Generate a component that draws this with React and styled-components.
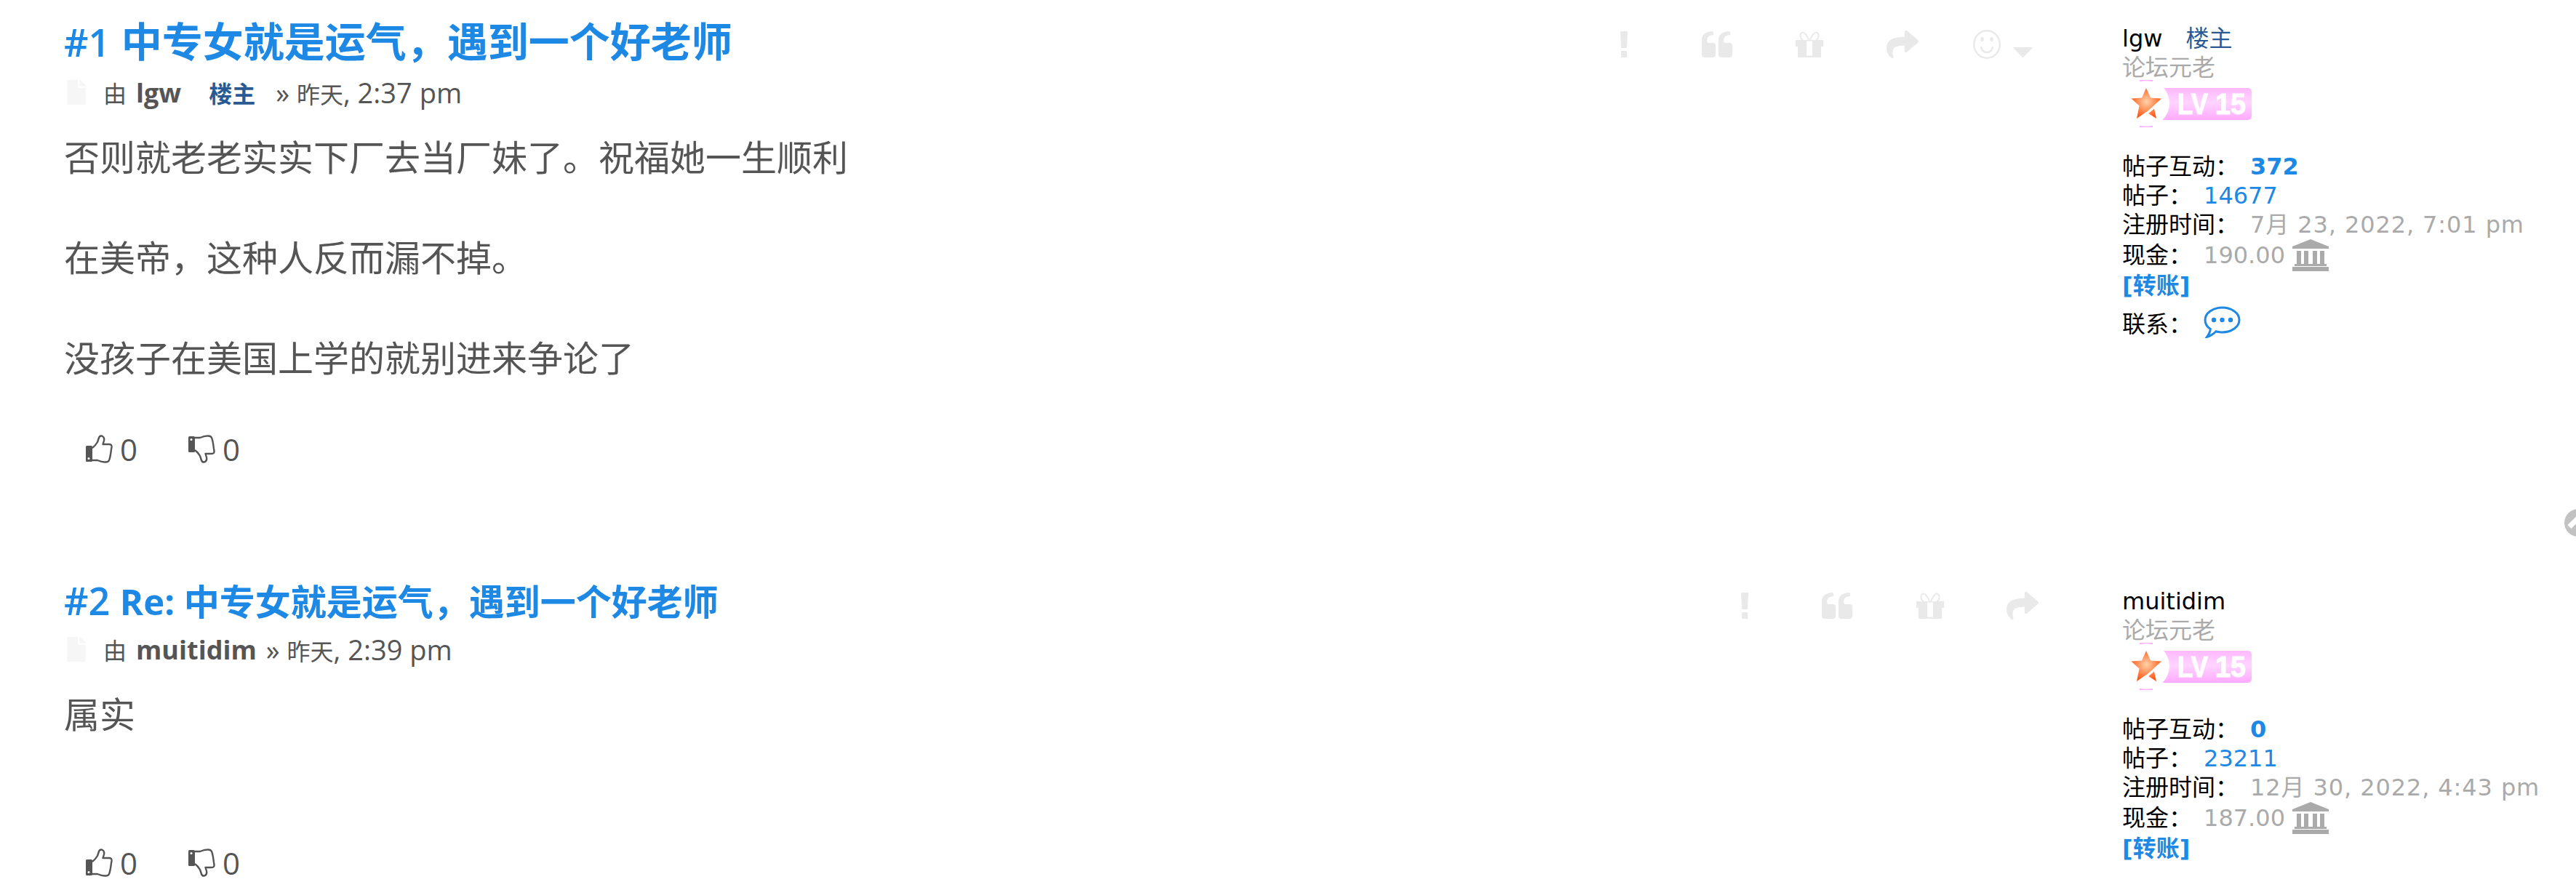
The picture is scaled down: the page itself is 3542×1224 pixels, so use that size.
import React from 'react'
import styled, { createGlobalStyle } from 'styled-components'
import { FaShare, FaFile } from 'react-icons/fa'

const GlobalStyle = createGlobalStyle`
  html, body { margin: 0; padding: 0; background: #fff; overflow: hidden; height: 1224px; }
  body { font-family: "Open Sans", "Noto Sans CJK SC", sans-serif; color: #555; }
`

// full-width punctuation
const COMMA = '\uFF0C'
const COLON = '\uFF1A'

const posts = [
  {
    num: '#1', title: `中专女就是运气${COMMA}遇到一个好老师`, author: 'lgw', op: true, day: '昨天', time: ', 2:37 pm',
    lines: ['否则就老老实实下厂去当厂妹了。祝福她一生顺利', `在美帝${COMMA}这种人反而漏不掉。`, '没孩子在美国上学的就别进来争论了'],
    smiley: true, reactions: 372, count: 14677, joined: '7月 23, 2022, 7:01 pm', cash: '190.00', contact: true,
  },
  {
    num: '#2', title: `Re: 中专女就是运气${COMMA}遇到一个好老师`, author: 'muitidim', op: false, day: '昨天', time: ', 2:39 pm',
    lines: ['属实'],
    smiley: false, reactions: 0, count: 23211, joined: '12月 30, 2022, 4:43 pm', cash: '187.00', contact: false,
  },
]

const ExclaimIcon = () => (
  <svg width="10" height="36" viewBox="0 0 10 36" fill="currentColor">
    <path d="M0 1 Q0 0 1 0 H9 Q10 0 10 1 L9 22 Q9 23 8 23 H2 Q1 23 1 22 Z" />
    <rect x="1" y="27" width="8" height="9" rx="1" />
  </svg>
)

const QuoteIcon = () => (
  <svg width="42" height="36" viewBox="0 0 42 36" fill="currentColor">
    <path d="M0 12 Q0 1 14 0 Q16 0 16 2 V5 Q8 5 7 12 Q7 16 9 16 H15 Q19 16 19 19 V32 Q19 36 15 36 H4 Q0 36 0 32 Z" />
    <path d="M23 12 Q23 1 37 0 Q39 0 39 2 V5 Q31 5 30 12 Q30 16 32 16 H38 Q42 16 42 19 V32 Q42 36 38 36 H27 Q23 36 23 32 Z" />
  </svg>
)

const GiftIcon = () => (
  <svg width="38" height="36" viewBox="0 0 38 36" fill="currentColor">
    <path fillRule="evenodd" d="M0 12 H38 V21 H35 V35 Q35 36 34 36 H4 Q3 36 3 35 V21 H0 Z M15 13.500 V33.500 H23 V13.500 Z" />
    <path d="M18 12 Q14 2 10 1.500 Q6 2 6.500 7 Q7 11 10 12 M20 12 Q24 2 28 1.500 Q32 2 31.500 7 Q31 11 28 12" fill="none" stroke="currentColor" strokeWidth="2" />
  </svg>
)

const SmileIcon = () => (
  <svg width="38" height="40" viewBox="0 0 38 40" fill="none" stroke="currentColor" strokeWidth="2.4">
    <ellipse cx="19" cy="20" rx="17.800" ry="18.800" />
    <ellipse cx="12.500" cy="13" rx="2.400" ry="3" fill="currentColor" stroke="none" />
    <ellipse cx="25.500" cy="13" rx="2.400" ry="3" fill="currentColor" stroke="none" />
    <path d="M11 23 Q12 31 19 31 Q26 31 27 23" />
  </svg>
)

const CaretIcon = () => (
  <svg width="27" height="14" viewBox="0 0 27 14" fill="currentColor">
    <path d="M1 0 H26 Q27 0 26.500 1 L14 14 H13 L0.500 1 Q0 0 1 0 Z" />
  </svg>
)

const ThumbIcon = ({ down }) => (
  <ThumbSvg viewBox="0 0 37 39">
    <g transform={down ? 'translate(0 39) scale(1 -1)' : undefined}>
      <rect x="0" y="15" width="9" height="22" rx="1.500" fill="#555" />
      <circle cx="4" cy="32.500" r="1.500" fill="#fff" />
      <path
        d="M9 18 Q13 15 16 10 L18 4 Q19 1 22 1.500 Q26 3 25 8 L23.500 13 H32 Q36 13 35.500 17 L35 20 Q33.500 32 32 35 Q30.500 38 26 37.500 Q22 37.500 16 35 H9"
        fill="none" stroke="#555" strokeWidth="2.400" strokeLinejoin="round"
      />
    </g>
  </ThumbSvg>
)

const BankIcon = () => (
  <svg width="50" height="44" viewBox="0 0 50 44" fill="#aaa">
    <path d="M25 0 L50 10 V13 H0 V10 Z" />
    <rect x="6" y="16" width="6" height="20" />
    <rect x="16" y="16" width="6" height="20" />
    <rect x="28" y="16" width="6" height="20" />
    <rect x="38" y="16" width="6" height="20" />
    <rect x="3" y="34" width="44" height="3" />
    <rect x="0" y="38" width="50" height="6" />
  </svg>
)

const ChatIcon = () => (
  <svg width="51" height="44" viewBox="0 0 51 44" fill="none" stroke="#1e88e5" strokeWidth="3">
    <path d="M25.500 2 C38.500 2 49 9.500 49 19 C49 28.500 38.500 36 25.500 36 C22.500 36 19.500 35.500 17 34.800 C13 38.800 8.500 41.500 4.500 42.500 C7.500 38.500 9 35 9.300 31.500 C4.500 28.500 2 24 2 19 C2 9.500 12.500 2 25.500 2 Z" />
    <circle cx="14" cy="19" r="3.200" fill="#1e88e5" stroke="none" />
    <circle cx="25.500" cy="19" r="3.200" fill="#1e88e5" stroke="none" />
    <circle cx="37" cy="19" r="3.200" fill="#1e88e5" stroke="none" />
  </svg>
)

function LevelBadge({ id }) {
  return (
    <BadgeSvg viewBox="0 0 176 65">
      <defs>
        <linearGradient id={`pill${id}`} x1="0" y1="0" x2="0" y2="1">
          <stop offset="0" stopColor="#ffb8ff" />
          <stop offset="0.45" stopColor="#ffd4ff" />
          <stop offset="1" stopColor="#ffaaff" />
        </linearGradient>
        <radialGradient id={`star${id}`} cx="0.5" cy="0.45" r="0.55">
          <stop offset="0" stopColor="#ffd2a8" />
          <stop offset="1" stopColor="#ff5512" />
        </radialGradient>
      </defs>
      <rect x="40" y="11" width="136" height="44" rx="5" fill={`url(#pill${id})`} />
      <circle cx="31" cy="32" r="32" fill="#fff" />
      <path d="M22 1 Q31 -1 40 1 M22 64 Q31 66 40 64" stroke="#ffb0ff" strokeWidth="2.500" fill="none" />
      <path d="M31 11 L37 24.500 L52 25.500 L41 35.500 L45 53 L31 44 L18 53 L21.500 35.500 L10.500 25.500 L25 24.500 Z" fill={`url(#star${id})`} />
      <path d="M20 56 L47 33" stroke="#fff" strokeWidth="3.500" />
      <BadgeText x="74" y="47" textLength="42" lengthAdjust="spacingAndGlyphs">LV</BadgeText>
      <BadgeText x="126" y="47" textLength="42" lengthAdjust="spacingAndGlyphs">15</BadgeText>
    </BadgeSvg>
  )
}

function Post({ post }) {
  const re = !post.smiley
  return (
    <PostRow $first={!re}>
      <Main>
        <TitleRow $re={re}>
          <Title>{post.num} <TitleText $re={re}>{post.title}</TitleText></Title>
          <Actions>
            <ActionIcon><ExclaimIcon /></ActionIcon>
            <ActionIcon><QuoteIcon /></ActionIcon>
            <ActionIcon><GiftIcon /></ActionIcon>
            <ActionIcon><FaShare /></ActionIcon>
            {post.smiley && (
              <SmileyIcon><SmileIcon /><CaretIcon /></SmileyIcon>
            )}
          </Actions>
        </TitleRow>
        <Meta>
          <FileIcon><FaFile /></FileIcon>
          <Cjk>由</Cjk>
          <strong>{post.author}</strong>
          {post.op && <OpTag>楼主</OpTag>}
          <Time $op={post.op}>» <Cjk>{post.day}</Cjk>{post.time}</Time>
        </Meta>
        <Content $short={re}>
          {post.lines.map((l) => <p key={l}>{l}</p>)}
        </Content>
        <Votes>
          <Vote><ThumbIcon /> 0</Vote>
          <Vote><ThumbIcon down /> 0</Vote>
        </Votes>
      </Main>
      <Profile>
        <Name $re={re}>{post.author}{post.op && <NameTag>楼主</NameTag>}</Name>
        <Rank>论坛元老</Rank>
        <LevelBadge id={post.num.slice(1)} />
        <Stats>
          <Stat>帖子互动{COLON}<Value $strong>{post.reactions}</Value></Stat>
          <Stat>帖子{COLON}<Value>{post.count}</Value></Stat>
          <Stat>注册时间{COLON}<Grey $spaced>{post.joined}</Grey></Stat>
          <CashStat>现金{COLON}<Grey>{post.cash}</Grey><Bank><BankIcon /></Bank></CashStat>
          <Transfer>[转账]</Transfer>
          {post.contact && (
            <ContactStat>联系{COLON}<Chat><ChatIcon /></Chat></ContactStat>
          )}
        </Stats>
      </Profile>
    </PostRow>
  )
}

export default function App() {
  return (
    <Page>
      <GlobalStyle />
      {posts.map((p) => <Post key={p.num} post={p} />)}
      <EdgeButton />
    </Page>
  )
}

const Page = styled.div`
  position: relative;
  width: 3542px;
  height: 1224px;
  overflow: hidden;
`

const PostRow = styled.div`
  display: grid;
  grid-template-columns: 2742px 1fr;
  column-gap: 88px;
  padding-left: 88px;
  padding-top: 15px;
  height: ${(p) => (p.$first ? '772px' : '452px')};
  box-sizing: border-box;
`

const Main = styled.div`
  display: flex;
  flex-direction: column;
  min-width: 0;
`

const TitleRow = styled.div`
  display: flex;
  align-items: center;
  justify-content: space-between;
  height: ${(p) => (p.$re ? '60px' : '72px')};
  margin-top: ${(p) => (p.$re ? '6px' : '0')};
  padding-right: 25px;
`

const Title = styled.h3`
  margin: 0;
  padding-top: 4px;
  font-size: 52px;
  font-weight: 600;
  color: #1e88e5;
  white-space: nowrap;
`

const TitleText = styled.span`
  font-size: ${(p) => (p.$re ? '49px' : '56px')};
  font-weight: 700;
  margin-left: ${(p) => (p.$re ? '0' : '2px')};
`

const Actions = styled.div`
  display: flex;
  align-items: center;
  gap: 79.500px;
  margin-top: 20px;
  color: #e9e9e9;
`

const ActionIcon = styled.span`
  display: flex;
  justify-content: center;
  width: 48px;
  font-size: 44px;
`

const SmileyIcon = styled.span`
  display: flex;
  align-items: flex-end;
  gap: 17px;
  margin-left: -6px;
  margin-right: 10px;
  svg:last-child { margin-bottom: 2px; }
`

const Meta = styled.div`
  display: flex;
  align-items: center;
  font-size: 36px;
  height: 42px;
  margin-top: 19px;
  white-space: pre;
  strong { font-weight: 700; margin-left: 13px; }
`

const Cjk = styled.span`
  font-size: 32px;
`

const FileIcon = styled.span`
  display: flex;
  color: #f6f6f6;
  font-size: 34px;
  margin-right: 20px;
`

const OpTag = styled.strong`
  color: #2a5a94;
  font-size: 32px;
  margin-left: 38px !important;
`

const Time = styled.span`
  margin-left: ${(p) => (p.$op ? '28px' : '13px')};
  font-size: 38px;
`

const Content = styled.div`
  margin-top: 34px;
  font-size: 49px;
  line-height: 69px;
  height: ${(p) => (p.$short ? '210px' : '407px')};
  p { margin: 0 0 69px; }
`

const Votes = styled.div`
  display: flex;
  gap: 70px;
  padding-left: 30px;
  font-size: 42px;
`

const Vote = styled.span`
  display: flex;
  align-items: center;
  gap: 10px;
`

const ThumbSvg = styled.svg`
  display: block;
  width: 37px;
  height: 39px;
`

const Profile = styled.div`
  font-family: "DejaVu Sans", "Noto Sans CJK SC", sans-serif;
  color: #000;
  font-size: 32px;
  line-height: 40px;
`

const Name = styled.div`
  margin-top: ${(p) => (p.$re ? '20px' : '18px')};
`

const NameTag = styled.span`
  color: #2a5a94;
  margin-left: 32px;
`

const Rank = styled.div`
  color: #aaa;
`

const BadgeSvg = styled.svg`
  display: block;
  width: 176px;
  height: 65px;
  margin: -3px 0 0 2px;
`

const BadgeText = styled.text`
  font-family: "Liberation Sans", sans-serif;
  font-weight: 700;
  font-size: 40px;
  fill: #fff;
  stroke: #fff;
  stroke-width: 1px;
`

const Stats = styled.div`
  margin-top: 34px;
`

const Stat = styled.div`
  display: flex;
  align-items: center;
  height: 40px;
  white-space: nowrap;
`

const CashStat = styled(Stat)`
  height: 44px;
`

const Value = styled.span`
  margin-left: 16px;
  color: #1e88e5;
  font-weight: ${(p) => (p.$strong ? 700 : 400)};
`

const Grey = styled.span`
  margin-left: 16px;
  color: #aaa;
  letter-spacing: ${(p) => (p.$spaced ? '0.9px' : '0')};
`

const Bank = styled.span`
  display: flex;
  margin-left: 10px;
`

const Transfer = styled.div`
  color: #1e88e5;
  font-weight: 700;
`

const ContactStat = styled(Stat)`
  height: 66px;
`

const Chat = styled.span`
  display: flex;
  margin: -6px 0 0 16px;
`

const EdgeButton = styled.div`
  position: absolute;
  left: 3526px;
  top: 700px;
  width: 38px;
  height: 38px;
  border-radius: 50%;
  background: #c2c2c2;
  &::after {
    content: '';
    position: absolute;
    left: 4px;
    top: 14px;
    width: 20px;
    height: 7px;
    background: #fff;
    transform: rotate(-45deg);
  }
`
